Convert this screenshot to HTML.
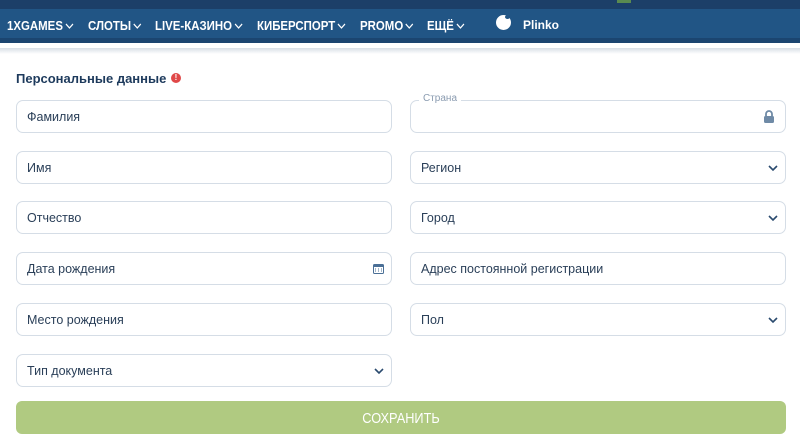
<!DOCTYPE html>
<html><head><meta charset="utf-8"><style>
*{box-sizing:border-box;margin:0;padding:0}
body{width:800px;height:446px;overflow:hidden;background:#fff;font-family:"Liberation Sans",sans-serif;position:relative}
.top{position:absolute;left:0;top:0;width:800px;height:9px;background:#1c3f68}
.nav{position:absolute;left:0;top:9px;width:800px;height:34px;background:#215585;border-bottom:5px solid #1b4570}
.sh{position:absolute;left:0;top:48px;width:800px;height:6px;background:linear-gradient(#d8dee6,#fff)}
.ni{position:absolute;top:18px;color:#fff;font:bold 13px "Liberation Sans",sans-serif;white-space:nowrap;transform:scaleX(0.88);transform-origin:0 0}
.ni svg{vertical-align:1px;margin-left:2px}
h2{position:absolute;left:16px;top:71px;font-size:13px;font-weight:bold;color:#1d3a5c}
.dot{position:absolute;left:171px;top:73px;width:10px;height:10px;border-radius:50%;background:#e04848;color:#fff;font-size:8px;font-weight:bold;text-align:center;line-height:10px}
.f{position:absolute;height:33px;border:1px solid #d5dde6;border-radius:7px;font-size:12.5px;color:#2a3f58;padding-left:10px;line-height:33px}
.l{left:16px;width:376px}.r{left:410px;width:376px}
.ch{position:absolute;right:7px;top:13px}
.btn{position:absolute;left:16px;top:401px;width:770px;height:33px;border-radius:6px;background:#b0ca81}
.btn span{position:absolute;left:385px;top:9px;color:#fff;font:15px "Liberation Sans",sans-serif;transform:translateX(-50%) scaleX(0.85);white-space:nowrap}
</style></head><body>
<div class="top"></div>
<div style="position:absolute;left:617px;top:0;width:14px;height:3px;background:#5a8a50"></div>
<div class="nav"></div><div class="sh"></div>
<div class="ni" style="left:7px">1XGAMES<svg width="10" height="6"><path d="M1 1l4 4L9 1" stroke="#fff" fill="none" stroke-width="1.3"/></svg></div>
<div class="ni" style="left:88px">СЛОТЫ<svg width="10" height="6"><path d="M1 1l4 4L9 1" stroke="#fff" fill="none" stroke-width="1.3"/></svg></div>
<div class="ni" style="left:155px">LIVE-КАЗИНО<svg width="10" height="6"><path d="M1 1l4 4L9 1" stroke="#fff" fill="none" stroke-width="1.3"/></svg></div>
<div class="ni" style="left:257px">КИБЕРСПОРТ<svg width="10" height="6"><path d="M1 1l4 4L9 1" stroke="#fff" fill="none" stroke-width="1.3"/></svg></div>
<div class="ni" style="left:360px">PROMO<svg width="10" height="6"><path d="M1 1l4 4L9 1" stroke="#fff" fill="none" stroke-width="1.3"/></svg></div>
<div class="ni" style="left:427px">ЕЩЁ<svg width="10" height="6"><path d="M1 1l4 4L9 1" stroke="#fff" fill="none" stroke-width="1.3"/></svg></div>
<div style="position:absolute;left:496px;top:15px;width:15px;height:15px;border-radius:50%;background:#fff"></div>
<div style="position:absolute;left:505px;top:15px;width:5px;height:4px;border-radius:50%;background:#215585"></div>
<div class="ni" style="left:523px;transform:none;font-size:12px">Plinko</div>
<h2>Персональные данные</h2><div class="dot">!</div>
<div class="f l" style="top:100px">Фамилия</div>
<div class="f r" style="top:100px"><span style="position:absolute;left:8px;top:-9px;background:#fff;padding:0 4px;font-size:10px;color:#8a9bb0;line-height:14px">Страна</span>
<svg class="ch" style="top:9px;right:10px" width="12" height="13"><path d="M3 6V4a3 3 0 0 1 6 0v2" stroke="#6f8aa6" stroke-width="1.8" fill="none"/><rect x="1" y="6" width="10" height="7" rx="1.5" fill="#6f8aa6"/></svg></div>
<div class="f l" style="top:151px">Имя</div>
<div class="f r" style="top:151px">Регион<svg class="ch" width="10" height="7"><path d="M1 1l4 4 4-4" stroke="#2a4a6e" stroke-width="1.6" fill="none"/></svg></div>
<div class="f l" style="top:201px">Отчество</div>
<div class="f r" style="top:201px">Город<svg class="ch" width="10" height="7"><path d="M1 1l4 4 4-4" stroke="#2a4a6e" stroke-width="1.6" fill="none"/></svg></div>
<div class="f l" style="top:252px">Дата рождения<svg class="ch" style="top:10px" width="11" height="11"><rect x="0.5" y="1.5" width="10" height="9" rx="1" fill="none" stroke="#4a6f96"/><rect x="0.5" y="1.5" width="10" height="2.5" fill="#4a6f96"/><path d="M2 6h1M5 6h1M8 6h1M2 8h1M5 8h1M8 8h1" stroke="#4a6f96"/></svg></div>
<div class="f r" style="top:252px">Адрес постоянной регистрации</div>
<div class="f l" style="top:303px">Место рождения</div>
<div class="f r" style="top:303px">Пол<svg class="ch" width="10" height="7"><path d="M1 1l4 4 4-4" stroke="#2a4a6e" stroke-width="1.6" fill="none"/></svg></div>
<div class="f l" style="top:354px">Тип документа<svg class="ch" width="10" height="7"><path d="M1 1l4 4 4-4" stroke="#2a4a6e" stroke-width="1.6" fill="none"/></svg></div>
<div class="btn"><span>СОХРАНИТЬ</span></div>
</body></html>
